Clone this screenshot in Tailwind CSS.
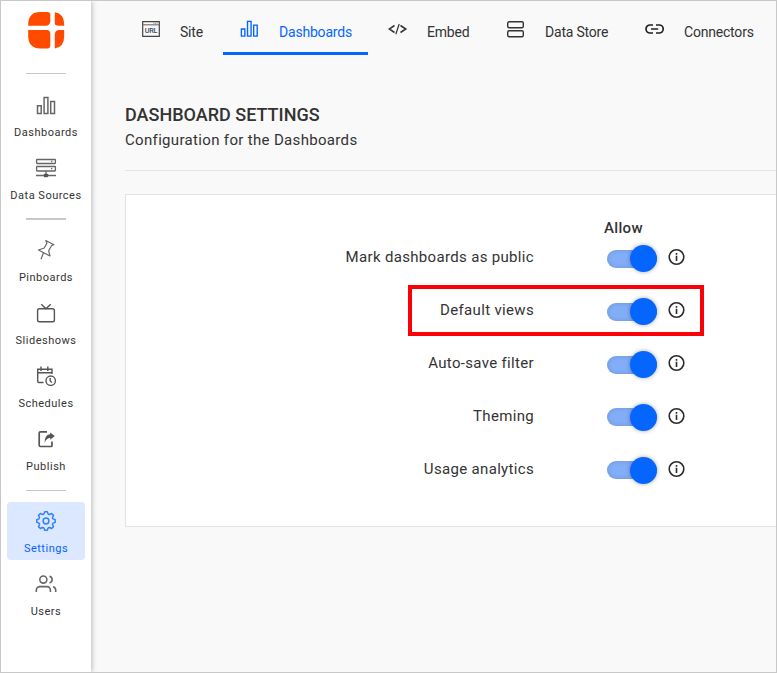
<!DOCTYPE html>
<html lang="en">
<head>
<meta charset="utf-8">
<title>Dashboard Settings</title>
<script src="https://cdn.jsdelivr.net/npm/@tailwindcss/browser@4"></script>
</head>
<body class="font-[Roboto,sans-serif] text-[#333]">
<svg class="hidden">
  <symbol id="info" viewBox="0 0 18 18"><circle cx="9.500" cy="9" r="7.300" fill="none" stroke="#2b2b2b" stroke-width="1.600"/><path d="M9.500 7.800V13M9.500 5v1.700" stroke="#2b2b2b" stroke-width="1.600"/></symbol>
  <symbol id="bars" viewBox="0 0 24 24"><path d="M3.500 12.700h3.700v7.700H3.500zM10.100 4.600h3.800v15.800h-3.800zM16.700 8.600h3.800v11.800h-3.800z" fill="none" stroke="currentColor" stroke-width="1.500"/></symbol>
</svg>
<div class="w-[777px] h-[673px] border border-[#c8c8c8] bg-[#f9f9f9] flex overflow-hidden">
  <aside class="w-[90px] shrink-0 bg-white shadow-[1px_0_5px_rgba(0,0,0,0.25)] flex flex-col items-center text-[11px] leading-[14px] tracking-[0.5px] [&_svg]:shrink-0">
    <svg class="mt-[10px] ml-px w-10 h-10" viewBox="0 0 40 40" fill="#ff4a00"><path d="M13 1H20.500Q23.300 1 23.300 3.800V11Q22.500 14.700 19 14.700H1.200V12.500Q2 1 13 1ZM27.800 1.300Q37.200 3 37.200 13V14.700H31.500Q27.800 14.700 27.800 12ZM1.200 19H20.500Q23.300 19.500 23.300 22.500V34Q23.300 37.500 20.500 37.500H13Q2 37.300 1.200 26ZM31.500 19H37.200V25Q37.200 36 27.800 37.500V24Q27.800 19.500 31.500 19Z"/></svg>
    <div class="w-10 h-px bg-[#c8c8c8] mt-[22px]"></div>
    <nav class="mt-3 flex flex-col gap-[5px]">
      <a class="w-[78px] h-[58px] pt-[7px] flex flex-col items-center gap-[9px] whitespace-nowrap"><svg class="w-6 h-6 text-[#666]"><use href="#bars"/></svg>Dashboards</a>
      <a class="w-[78px] h-[58px] pt-[7px] flex flex-col items-center gap-[9px] whitespace-nowrap"><svg class="w-6 h-6" viewBox="0 0 24 24" fill="none" stroke="#666" stroke-width="1.300"><rect x="2.600" y="3.500" width="18.800" height="4" rx=".5"/><rect x="2.600" y="10.500" width="18.800" height="4.500" rx=".5"/><path d="M2 19.500H22M12 15v4M17 5.500h1.300M17 12.700h1.300"/><rect x="9.800" y="17.800" width="4.400" height="3.400" rx="1" fill="#555" stroke="none"/></svg>Data Sources</a>
    </nav>
    <div class="w-10 h-[2px] bg-[#c8c8c8] mt-[11px]"></div>
    <nav class="mt-[11px] flex flex-col gap-[5px]">
      <a class="w-[78px] h-[58px] pt-[7px] flex flex-col items-center gap-[9px]"><svg class="w-6 h-6" viewBox="0 0 24 24" fill="none" stroke="#666" stroke-width="1.200" stroke-linejoin="round"><path d="M11.800 2.500 19.900 6.700 17.600 7.500 14.700 12.800 16 18 4.500 12 10.200 10 12.900 5.200ZM9.500 14.800 7 21.300"/></svg>Pinboards</a>
      <a class="w-[78px] h-[58px] pt-[7px] flex flex-col items-center gap-[9px]"><svg class="w-6 h-6" viewBox="0 0 24 24" fill="none" stroke="#555" stroke-width="1.400"><rect x="3.600" y="7.800" width="16.800" height="13" rx="1.800"/><path d="M7.300 3.300 12 7.800 16.700 3.300"/></svg>Slideshows</a>
      <a class="w-[78px] h-[58px] pt-[7px] flex flex-col items-center gap-[9px]"><svg class="w-6 h-6" viewBox="0 0 24 24" fill="none" stroke="#555" stroke-width="1.400"><path d="M9.500 18.500H5Q3.700 18.500 3.700 17V5.200H18V10M3.700 8.800H18M7 2.500V7M13.800 2.500V7"/><circle cx="16.700" cy="16.700" r="4.700"/><path d="M16.200 14V17L18 18.500"/></svg>Schedules</a>
      <a class="w-[78px] h-[58px] pt-[7px] flex flex-col items-center gap-[9px]"><svg class="w-6 h-6" viewBox="0 0 24 24" fill="none" stroke="#555" stroke-width="1.700"><path d="M13 4.800H6.500Q5.200 4.800 5.200 6V18.200Q5.200 19.500 6.500 19.500H17Q18 19.500 18 18.500V14.500"/><path d="M10.500 16Q10.800 7.300 16.200 7.200V5.500L20.800 9 16.200 12.800V10.700Q12.500 11 10.500 16Z" fill="#555" stroke="none"/></svg>Publish</a>
    </nav>
    <div class="w-10 h-px bg-[#c8c8c8] mt-3"></div>
    <nav class="mt-[11px] flex flex-col gap-[5px]">
      <a class="w-[78px] h-[58px] pt-[7px] flex flex-col items-center gap-[9px] rounded-[4px] bg-[#dbe8ff] text-[#0a63ff]"><svg class="w-6 h-6" viewBox="-12 -12 24 24" fill="none" stroke="#3580fb" stroke-width="1.500" stroke-linejoin="round"><path d="M-1.300-9.200H1.300L2.100-7.100Q2.500-6.400 3.500-6.500L5.600-7.500 7.500-5.600 6.500-3.500Q6.400-2.500 7.100-2.100L9.200-1.300V1.300L7.100 2.100Q6.400 2.500 6.500 3.500L7.500 5.600 5.600 7.500 3.500 6.500Q2.500 6.400 2.100 7.100L1.300 9.200H-1.300L-2.100 7.100Q-2.500 6.400-3.500 6.500L-5.600 7.500-7.500 5.600-6.500 3.500Q-6.400 2.500-7.100 2.100L-9.200 1.300V-1.300L-7.100-2.100Q-6.400-2.500-6.500-3.500L-7.500-5.600-5.600-7.500-3.500-6.500Q-2.500-6.400-2.100-7.100Z"/><circle r="2.900"/></svg>Settings</a>
      <a class="w-[78px] h-[58px] pt-[7px] flex flex-col items-center gap-[9px]"><svg class="w-6 h-6" viewBox="-1.600 -1.600 27.200 27.200" fill="none" stroke="#666" stroke-width="1.800"><path d="M17 21v-2a4 4 0 0 0-4-4H5a4 4 0 0 0-4 4v2M23 21v-2a4 4 0 0 0-3-3.870M16 3.130a4 4 0 0 1 0 7.750"/><circle cx="9" cy="7" r="4"/></svg>Users</a>
    </nav>
  </aside>
  <main class="flex-1 min-w-0 pl-[34px]">
    <nav class="-ml-[2px] flex gap-[3px] h-[54px] text-[14px] leading-5 tracking-[-0.2px] whitespace-nowrap [&>a]:flex [&>a]:items-start [&>a]:shrink-0 [&>a]:pl-[17px] [&_svg]:w-5 [&_svg]:h-5 [&_svg]:mt-[18px] [&_svg]:mr-[19px] [&_span]:mt-[21px]">
      <a class="w-[97px] ml-[2px] -mr-[2px] !pl-[16px]"><svg viewBox="0 0 20 20" fill="none" stroke="#444" stroke-width="1.200"><path d="M1.700 2.700H18.300V17.400H1.700Z"/><path d="M2 5.800H18" stroke="#777"/><path d="M12.500 4.200h4" stroke="#888" stroke-dasharray="1 .6"/><text x="10" y="14.300" text-anchor="middle" font-family="Roboto" font-size="7.300" font-weight="500" fill="#36465e" stroke="none">URL</text></svg><span>Site</span></a>
      <a class="w-[145px] border-b-[3px] border-[#0566ff] text-[#0566ff]"><svg viewBox="2 2 21.500 21.500"><use href="#bars" width="24" height="24"/></svg><span>Dashboards</span></a>
      <a class="w-[115px]"><svg viewBox="0 0 20 20" fill="none" stroke="#333" stroke-width="1.500"><path d="M6.500 6.500 1.200 10 6.500 13.500M12.500 6.500 17.800 10 12.500 13.500"/><path d="M11.200 5 7.800 15.300" stroke-width="1.200"/></svg><span>Embed</span></a>
      <a class="w-[136px]"><svg viewBox="0 0 20 20" fill="none" stroke="#333" stroke-width="1.400"><rect x="1.700" y="2.800" width="15.600" height="6" rx="1.500"/><rect x="1.700" y="11.800" width="15.600" height="6" rx="1.500"/></svg><span>Data Store</span></a>
      <a class="w-[141px]"><svg viewBox="0 0 20 20" fill="none" stroke="#222" stroke-width="1.700"><path d="M8 6H5a4 4 0 0 0 0 8H8M11 6h3.200a4 4 0 0 1 0 8H11M6 10h7.200"/></svg><span>Connectors</span></a>
    </nav>
    <h1 class="mt-[48px] text-[18px] leading-6 font-medium">DASHBOARD SETTINGS</h1>
    <p class="mt-[2px] text-[15px] leading-[22px] tracking-[0.330px]">Configuration for the Dashboards</p>
    <hr class="mt-[19px] border-0 h-px bg-[#e3e3e3]">
    <section class="relative mt-[23px] h-[333px] border border-r-0 border-[#e3e3e3] bg-white pt-[22px] text-[15px] leading-[22px] tracking-[0.330px]">
      <div class="ml-[478px] font-medium">Allow</div>
      <div class="[&>div]:h-[53px] [&>div]:flex [&>div>p]:w-[408px] [&>div>p]:text-right [&>div>p]:mt-[7px] [&>div>svg]:w-[18px] [&>div>svg]:h-[18px] [&>div>svg]:ml-[10px] [&>div>svg]:mt-[9px]">
        <div><p>Mark dashboards as public</p><span class="ml-[73px] mt-[11px] w-[50px] h-[18px] rounded-full bg-[#82aef8] shadow-[inset_0_0_5px_rgba(0,0,0,0.15)] flex justify-end items-center"><i class="size-[27px] -mt-px shrink-0 rounded-full bg-[#0566ff] shadow-[0_0_4px_rgba(0,0,0,0.35)]"></i></span><svg><use href="#info"/></svg></div>
        <div><p>Default views</p><span class="ml-[73px] mt-[11px] w-[50px] h-[18px] rounded-full bg-[#82aef8] shadow-[inset_0_0_5px_rgba(0,0,0,0.15)] flex justify-end items-center"><i class="size-[27px] -mt-px shrink-0 rounded-full bg-[#0566ff] shadow-[0_0_4px_rgba(0,0,0,0.35)]"></i></span><svg><use href="#info"/></svg></div>
        <div><p>Auto-save filter</p><span class="ml-[73px] mt-[11px] w-[50px] h-[18px] rounded-full bg-[#82aef8] shadow-[inset_0_0_5px_rgba(0,0,0,0.15)] flex justify-end items-center"><i class="size-[27px] -mt-px shrink-0 rounded-full bg-[#0566ff] shadow-[0_0_4px_rgba(0,0,0,0.35)]"></i></span><svg><use href="#info"/></svg></div>
        <div><p>Theming</p><span class="ml-[73px] mt-[10px] w-[50px] h-[18px] rounded-full bg-[#82aef8] shadow-[inset_0_0_5px_rgba(0,0,0,0.15)] flex justify-end items-center"><i class="size-[27px] mt-px shrink-0 rounded-full bg-[#0566ff] shadow-[0_0_4px_rgba(0,0,0,0.35)]"></i></span><svg><use href="#info"/></svg></div>
        <div><p>Usage analytics</p><span class="ml-[73px] mt-[10px] w-[50px] h-[18px] rounded-full bg-[#82aef8] shadow-[inset_0_0_5px_rgba(0,0,0,0.15)] flex justify-end items-center"><i class="size-[27px] mt-px shrink-0 rounded-full bg-[#0566ff] shadow-[0_0_4px_rgba(0,0,0,0.35)]"></i></span><svg><use href="#info"/></svg></div>
      </div>
      <div class="absolute left-[282px] top-[90px] w-[296px] h-[51px] border-4 border-[#fb0007]"></div>
    </section>
  </main>
</div>
</body>
</html>
